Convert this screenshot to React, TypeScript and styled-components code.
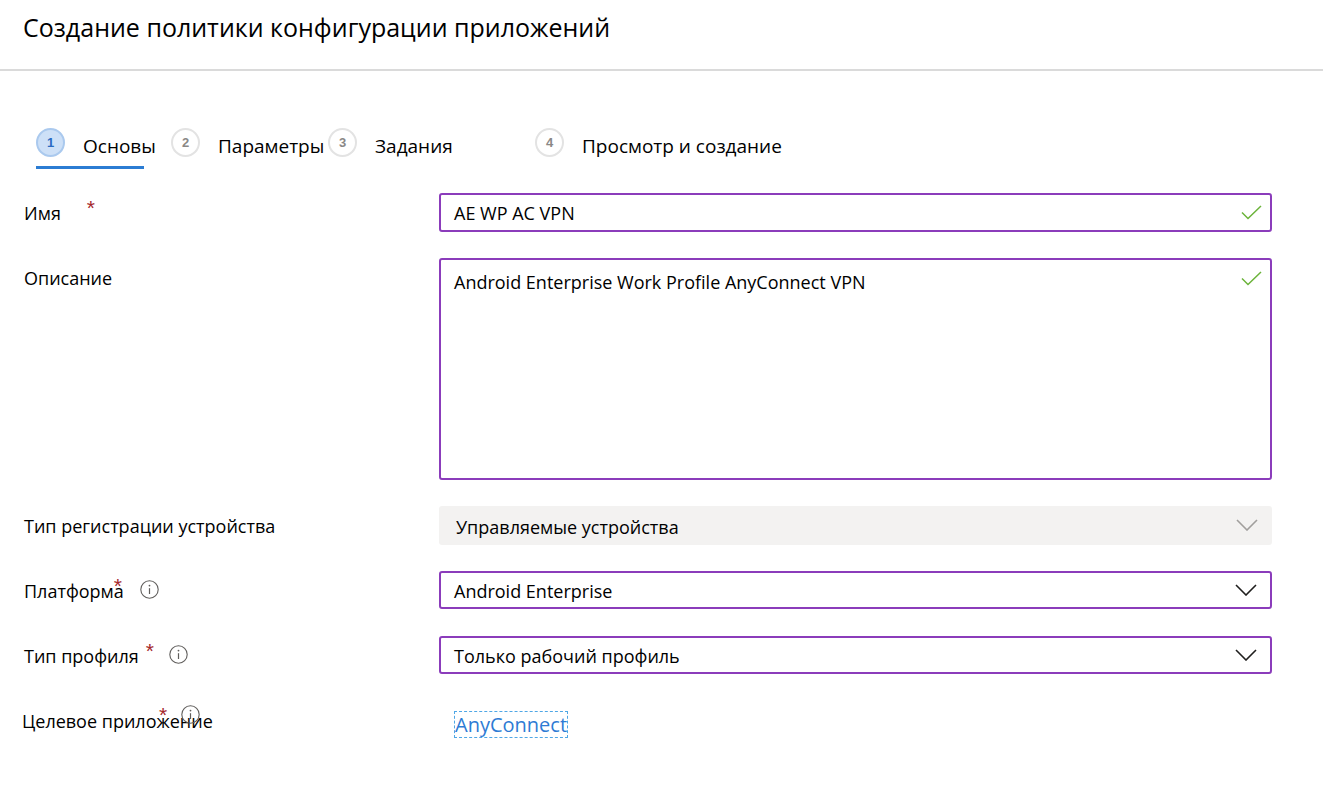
import styled, { createGlobalStyle } from 'styled-components';

const GlobalStyle = createGlobalStyle`
	body {
		margin: 0;
		background: #fff;
		color: #201f1e;
		font-family: "Open Sans", "Liberation Sans", Arial, sans-serif;
	}
`;

const Page = styled.div`
	width: 1323px;
	min-height: 790px;
`;

const Header = styled.header`
	box-sizing: border-box;
	height: 71px;
	padding: 10px 0 0 23px;
	border-bottom: 2px solid #dadada;
`;

const Title = styled.h1`
	margin: 0;
	font-size: 25px;
	font-weight: 400;
	line-height: 34px;
	color: #000;
`;

const Steps = styled.nav`
	display: flex;
	margin-top: 57px;
	padding-left: 36px;
	height: 41px;
`;

const Step = styled.div<{ $width?: number; $active?: boolean }>`
	position: relative;
	display: flex;
	align-items: flex-start;
	gap: 18px;
	width: ${(p) => (p.$width ? `${p.$width}px` : 'auto')};
	&::after {
		content: '';
		display: ${(p) => (p.$active ? 'block' : 'none')};
		position: absolute;
		left: 0;
		top: 38px;
		width: 108px;
		height: 3px;
		background: #2b7cd3;
	}
`;

const StepNumber = styled.span<{ $active?: boolean }>`
	box-sizing: border-box;
	width: 29px;
	height: 29px;
	border-radius: 50%;
	display: flex;
	align-items: center;
	justify-content: center;
	flex-shrink: 0;
	font-family: "Liberation Sans", Arial, sans-serif;
	font-size: 13px;
	font-weight: 700;
	background: ${(p) => (p.$active ? '#cde0f7' : '#fff')};
	border: 2px solid ${(p) => (p.$active ? '#aac9ee' : '#e3e3e3')};
	color: ${(p) => (p.$active ? '#2a6bc2' : '#8a8886')};
`;

const StepLabel = styled.span`
	font-size: 19px;
	line-height: 20px;
	margin-top: 8px;
	color: #000;
	white-space: nowrap;
`;

const Form = styled.div`
	display: grid;
	grid-template-columns: 415px 833px;
	row-gap: 26px;
	margin-top: 24px;
	padding-left: 24px;
`;

const Label = styled.div`
	display: flex;
	align-items: center;
	height: 39px;
	font-size: 18px;
	color: #000;
	white-space: nowrap;
`;

const Asterisk = styled.span<{ $offset: number }>`
	align-self: flex-start;
	margin-top: 5px;
	margin-left: ${(p) => p.$offset}px;
	font-family: "Liberation Sans", Arial, sans-serif;
	font-size: 21px;
	line-height: 20px;
	color: #a4262c;
`;

const InfoWrap = styled.span<{ $offset: number; $lift?: number }>`
	display: inline-flex;
	margin-left: ${(p) => p.$offset}px;
	margin-top: ${(p) => -(p.$lift ?? 2)}px;
`;

const LastLabel = styled.div`
	position: relative;
	height: 39px;
	padding-top: 8px;
	margin-left: -2px;
	font-size: 18px;
	color: #000;
	white-space: nowrap;
`;

const LastMarks = styled.span`
	position: absolute;
	left: 137px;
	top: -1px;
	display: flex;
	align-items: flex-start;
`;

const Field = styled.div<{ $height?: number; $top?: boolean }>`
	box-sizing: border-box;
	display: flex;
	align-items: ${(p) => (p.$top ? 'flex-start' : 'center')};
	justify-content: space-between;
	height: ${(p) => p.$height ?? 39}px;
	padding: ${(p) => (p.$top ? '10px 8px 0 13px' : '0 8px 0 13px')};
	border: 2px solid #8b3cbb;
	border-radius: 3px;
	font-size: 18px;
	color: #000;
	svg {
		margin-top: ${(p) => (p.$top ? '1px' : '0')};
	}
`;

const SelectBox = styled.div<{ $disabled?: boolean }>`
	box-sizing: border-box;
	display: flex;
	align-items: center;
	justify-content: space-between;
	height: ${(p) => (p.$disabled ? 39 : 38)}px;
	padding: ${(p) => (p.$disabled ? '2px 14px 0 17px' : '2px 13px 0 13px')};
	border: ${(p) => (p.$disabled ? 'none' : '2px solid #8b3cbb')};
	background: ${(p) => (p.$disabled ? '#f3f2f1' : '#fff')};
	border-radius: 3px;
	font-size: 18px;
	color: #000;
	svg {
		margin-top: -3px;
	}
`;

const LinkCell = styled.div`
	display: flex;
	align-items: flex-start;
`;

const AppLink = styled.a`
	margin: 10px 0 0 15px;
	border: 1px dashed #4fa7e6;
	font-size: 20px;
	line-height: 25px;
	color: #2e7bd4;
	text-decoration: none;
`;

function Check() {
	return (
		<svg width="21" height="15" viewBox="0 0 21 15" fill="none">
			<path d="M1 7.5L7 13.5L20 1" stroke="#6bb33a" strokeWidth="1.5" />
		</svg>
	);
}

function Chevron({ color }: { color: string }) {
	return (
		<svg width="22" height="12" viewBox="0 0 22 12" fill="none">
			<path d="M1 1L11 11L21 1" stroke={color} strokeWidth="1.6" />
		</svg>
	);
}

function InfoIcon() {
	return (
		<svg width="19" height="19" viewBox="0 0 19 19" fill="none">
			<circle cx="9.5" cy="9.5" r="8.7" stroke="#605e5c" strokeWidth="1.1" />
			<circle cx="9.5" cy="5.6" r="0.9" fill="#605e5c" />
			<path d="M9.5 8.2V14" stroke="#605e5c" strokeWidth="1.2" />
		</svg>
	);
}

const steps = [
	{ n: 1, label: 'Основы', width: 135, active: true },
	{ n: 2, label: 'Параметры', width: 157 },
	{ n: 3, label: 'Задания', width: 207 },
	{ n: 4, label: 'Просмотр и создание' },
];

function App() {
	return (
		<Page>
			<GlobalStyle />
			<Header>
				<Title>Создание политики конфигурации приложений</Title>
			</Header>
			<Steps>
				{steps.map((s) => (
					<Step key={s.n} $width={s.width} $active={s.active}>
						<StepNumber $active={s.active}>{s.n}</StepNumber>
						<StepLabel>{s.label}</StepLabel>
					</Step>
				))}
			</Steps>
			<Form>
				<Label>
					Имя
					<Asterisk $offset={26}>*</Asterisk>
				</Label>
				<Field>
					AE WP AC VPN
					<Check />
				</Field>

				<Label>Описание</Label>
				<Field $height={222} $top>
					Android Enterprise Work Profile AnyConnect VPN
					<Check />
				</Field>

				<Label>Тип регистрации устройства</Label>
				<SelectBox $disabled>
					Управляемые устройства
					<Chevron color="#a19f9d" />
				</SelectBox>

				<Label>
					Платформа
					<Asterisk $offset={-10}>*</Asterisk>
					<InfoWrap $offset={18}>
						<InfoIcon />
					</InfoWrap>
				</Label>
				<SelectBox>
					Android Enterprise
					<Chevron color="#201f1e" />
				</SelectBox>

				<Label>
					Тип профиля
					<Asterisk $offset={7}>*</Asterisk>
					<InfoWrap $offset={15}>
						<InfoIcon />
					</InfoWrap>
				</Label>
				<SelectBox>
					Только рабочий профиль
					<Chevron color="#201f1e" />
				</SelectBox>

				<LastLabel>
					Целевое приложение
					<LastMarks>
						<Asterisk $offset={0}>*</Asterisk>
						<InfoWrap $offset={14} $lift={-5}>
							<InfoIcon />
						</InfoWrap>
					</LastMarks>
				</LastLabel>
				<LinkCell>
					<AppLink href="#">AnyConnect</AppLink>
				</LinkCell>
			</Form>
		</Page>
	);
}

export default App;
